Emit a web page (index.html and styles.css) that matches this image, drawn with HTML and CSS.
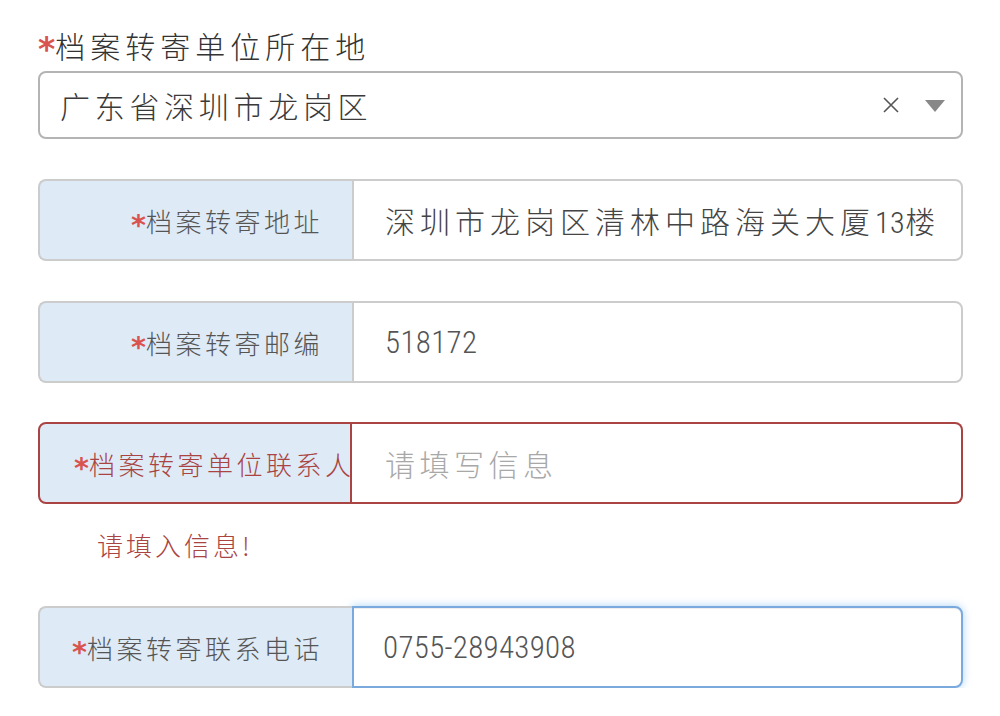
FILE: index.html
```html
<!DOCTYPE html>
<html lang="zh-CN">
<head>
<meta charset="utf-8">
<title>档案转寄</title>
<link rel="stylesheet" href="styles.css">
</head>
<body>
<div class="form">
  <div class="title"><span class="req">*</span>档案转寄单位所在地</div>
  <div class="select">
    <span class="select-value">广东省深圳市龙岗区</span>
    <span class="select-clear">
      <svg width="18" height="18" viewBox="0 0 18 18"><path d="M2 2 L16 16 M16 2 L2 16" stroke="#555" stroke-width="1.6" fill="none"/></svg>
    </span>
    <span class="select-caret">
      <svg width="20" height="13" viewBox="0 0 20 13"><path d="M0 0 H20 L10 12 Z" fill="#888"/></svg>
    </span>
  </div>

  <div class="group">
    <div class="addon"><span class="label"><span class="req">*</span>档案转寄地址</span></div>
    <div class="control"><span class="value">深圳市龙岗区清林中路海关大厦<span class="num">13</span>楼</span></div>
  </div>

  <div class="group">
    <div class="addon"><span class="label"><span class="req">*</span>档案转寄邮编</span></div>
    <div class="control"><span class="value num">518172</span></div>
  </div>

  <div class="group group-error">
    <div class="addon"><span class="label"><span class="req">*</span>档案转寄单位联系人</span></div>
    <div class="control"><span class="placeholder">请填写信息</span></div>
  </div>
  <div class="help">请填入信息!</div>

  <div class="group group-focus">
    <div class="addon"><span class="label"><span class="req">*</span>档案转寄联系电话</span></div>
    <div class="control"><span class="value num">0755-28943908</span></div>
  </div>
</div>
</body>
</html>
```

FILE: styles.css
```css
html, body {
  margin: 0;
  padding: 0;
  background: #ffffff;
}

body {
  font-family: "Noto Sans CJK SC", "Noto Sans", sans-serif;
  font-weight: 300;
  color: #3a3a3a;
}

.form {
  width: 925px;
  padding: 25px 0 0 38px;
}

.req {
  color: #d9534f;
  font-family: "DejaVu Sans", sans-serif;
  font-weight: 700;
  font-size: 1.1em;
  line-height: 0;
  vertical-align: -0.1em;
  letter-spacing: 0;
}

.title {
  font-size: 30px;
  line-height: 40px;
  height: 40px;
  letter-spacing: 5px;
  color: #333333;
  white-space: nowrap;
}

.select {
  margin-top: 6px;
  height: 68px;
  box-sizing: border-box;
  border: 2px solid #b4b4b4;
  border-radius: 8px;
  display: flex;
  align-items: center;
  padding: 0 16px 0 20px;
}

.select-value {
  flex: 1;
  font-size: 30px;
  letter-spacing: 4.7px;
  color: #3a3a3a;
}

.select-clear {
  display: flex;
  margin-right: 25px;
}

.select-caret {
  display: flex;
  margin-top: 2px;
}

.group {
  margin-top: 40px;
  height: 82px;
  display: flex;
}

.group-error {
  margin-top: 39px;
}

.addon {
  width: 314px;
  flex: none;
  box-sizing: border-box;
  background: #deeaf6;
  border: 2px solid #cccccc;
  border-right: none;
  border-radius: 8px 0 0 8px;
  display: flex;
  align-items: center;
  padding: 0 29px 0 32px;
  font-size: 26px;
  letter-spacing: 3.5px;
  color: #555555;
  white-space: nowrap;
  position: relative;
  z-index: 1;
}

.label {
  margin-left: auto;
}

.control {
  flex: 1;
  box-sizing: border-box;
  border: 2px solid #cccccc;
  border-radius: 0 8px 8px 0;
  background: #ffffff;
  display: flex;
  align-items: center;
  padding: 0 20px 0 31px;
  white-space: nowrap;
}

.value {
  font-size: 30px;
  letter-spacing: 5px;
  color: #444444;
}

.num {
  font-family: "Roboto Condensed", "Liberation Sans Narrow", Roboto, sans-serif;
  font-weight: 300;
  font-size: 31px;
  letter-spacing: 0.3px;
  color: #555555;
}

.value .num {
  font-size: 30px;
  letter-spacing: 0.5px;
  color: #444444;
}

.placeholder {
  font-size: 30px;
  letter-spacing: 4.5px;
  color: #a8a8a8;
}

.group-error .addon,
.group-error .control {
  border-color: #a94442;
}

.group-error .addon {
  color: #a94442;
  border-right: 2px solid #a94442;
  padding-left: 34px;
}

.group-error .control {
  border-left: none;
  padding-left: 33px;
}

.help {
  margin: 26px 0 0 59px;
  font-size: 26px;
  line-height: 30px;
  letter-spacing: 3px;
  color: #a94442;
}

.help + .group {
  margin-top: 46px;
}

.group-focus .control {
  border-color: #7aa9dd;
  box-shadow: inset 0 1px 1px rgba(0, 0, 0, 0.075), 0 0 9px rgba(102, 175, 233, 0.55);
  padding-left: 29px;
}
```
